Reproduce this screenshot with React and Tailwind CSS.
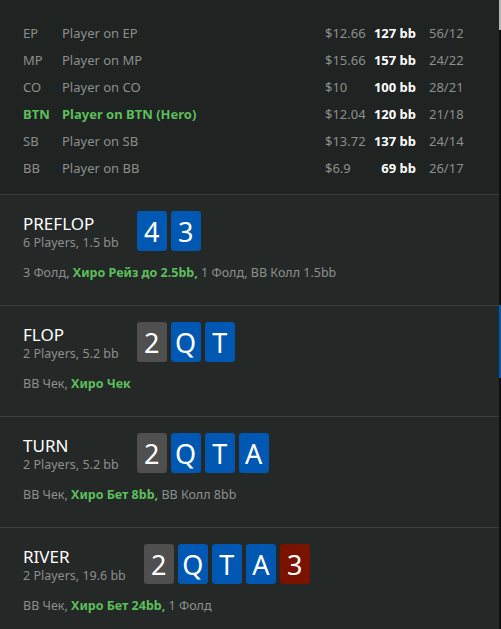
import React from "react";

const players = [
  { pos: "EP", name: "Player on EP", money: "$12.66", bb: "127 bb", ratio: "56/12" },
  { pos: "MP", name: "Player on MP", money: "$15.66", bb: "157 bb", ratio: "24/22" },
  { pos: "CO", name: "Player on CO", money: "$10", bb: "100 bb", ratio: "28/21" },
  { pos: "BTN", name: "Player on BTN (Hero)", money: "$12.04", bb: "120 bb", ratio: "21/18", hero: true },
  { pos: "SB", name: "Player on SB", money: "$13.72", bb: "137 bb", ratio: "24/14" },
  { pos: "BB", name: "Player on BB", money: "$6.9", bb: "69 bb", ratio: "26/17" },
];

const cardColors = {
  blue: "bg-[#0058b3]",
  gray: "bg-[#4f4f4f]",
  red: "bg-[#7a1200]",
};

const streets = [
  {
    title: "PREFLOP",
    info: "6 Players, 1.5 bb",
    cards: [["4", "blue"], ["3", "blue"]],
    actions: [["3 Фолд, "], ["Хиро Рейз до 2.5bb,", true], [" 1 Фолд, BB Колл 1.5bb"]],
  },
  {
    title: "FLOP",
    info: "2 Players, 5.2 bb",
    cards: [["2", "gray"], ["Q", "blue"], ["T", "blue"]],
    actions: [["BB Чек, "], ["Хиро Чек", true]],
  },
  {
    title: "TURN",
    info: "2 Players, 5.2 bb",
    cards: [["2", "gray"], ["Q", "blue"], ["T", "blue"], ["A", "blue"]],
    actions: [["BB Чек, "], ["Хиро Бет 8bb,", true], [" BB Колл 8bb"]],
  },
  {
    title: "RIVER",
    info: "2 Players, 19.6 bb",
    cards: [["2", "gray"], ["Q", "blue"], ["T", "blue"], ["A", "blue"], ["3", "red"]],
    actions: [["BB Чек, "], ["Хиро Бет 24bb,", true], [" 1 Фолд"]],
  },
];

const Card = ({ rank, color }) => (
  <div
    className={`w-[30px] h-[40px] rounded-[3px] flex items-center justify-center text-white text-[27px] leading-none ${cardColors[color]}`}
  >
    {rank}
  </div>
);

export default function App() {
  return (
    <div className="w-[501px] h-[629px] flex overflow-hidden bg-[#1f2321] font-['Noto_Sans',sans-serif]">
      <div className="w-[499px] flex flex-col">
        {/* players */}
        <div className="shrink-0 pt-[20px] pb-[12px] bg-[#1f2321]">
          {players.map((p) => (
            <div key={p.pos} className="flex items-center h-[27px] pl-[23px] text-[13px] whitespace-nowrap">
              <div className={`w-[39px] ${p.hero ? "text-[#5cbf5c] font-bold" : "text-[#8b908e]"}`}>{p.pos}</div>
              <div className={`w-[263px] ${p.hero ? "text-[#5cbf5c] font-bold" : "text-[#8b908e]"}`}>{p.name}</div>
              <div className="w-[41px] text-[#8b908e]">{p.money}</div>
              <div className="w-[50px] text-right text-white font-bold">{p.bb}</div>
              <div className="ml-[13px] text-[#8b908e]">{p.ratio}</div>
            </div>
          ))}
        </div>

        {/* streets */}
        {streets.map((s) => (
          <div key={s.title} className="shrink-0 border-t border-[#3b3f3e] bg-[#242827] h-[111px] pl-[23px] pt-[16px]">
            <div className="flex items-start">
              <div className="pt-[2px] whitespace-nowrap">
                <div className="text-white text-[17px] leading-[22px]">{s.title}</div>
                <div className="text-[#8b908e] text-[12.5px] leading-[16px]">{s.info}</div>
              </div>
              <div className="flex gap-[4px] ml-[18px]">
                {s.cards.map(([r, c], i) => (
                  <Card key={i} rank={r} color={c} />
                ))}
              </div>
            </div>
            <div className="mt-[14px] text-[12.5px] leading-[16px] text-[#8b908e] whitespace-nowrap">
              {s.actions.map(([t, hero], i) => (
                <span key={i} className={hero ? "text-[#5cbf5c] font-bold" : ""}>
                  {t}
                </span>
              ))}
            </div>
          </div>
        ))}
      </div>

      {/* edge of window behind */}
      <div className="w-[2px] flex flex-col bg-[#0d0f0f]">
        <div className="h-[30px] bg-[#b5b5b5]"></div>
        <div className="h-[275px]"></div>
        <div className="h-[73px] bg-[#0058b3]"></div>
      </div>
    </div>
  );
}
